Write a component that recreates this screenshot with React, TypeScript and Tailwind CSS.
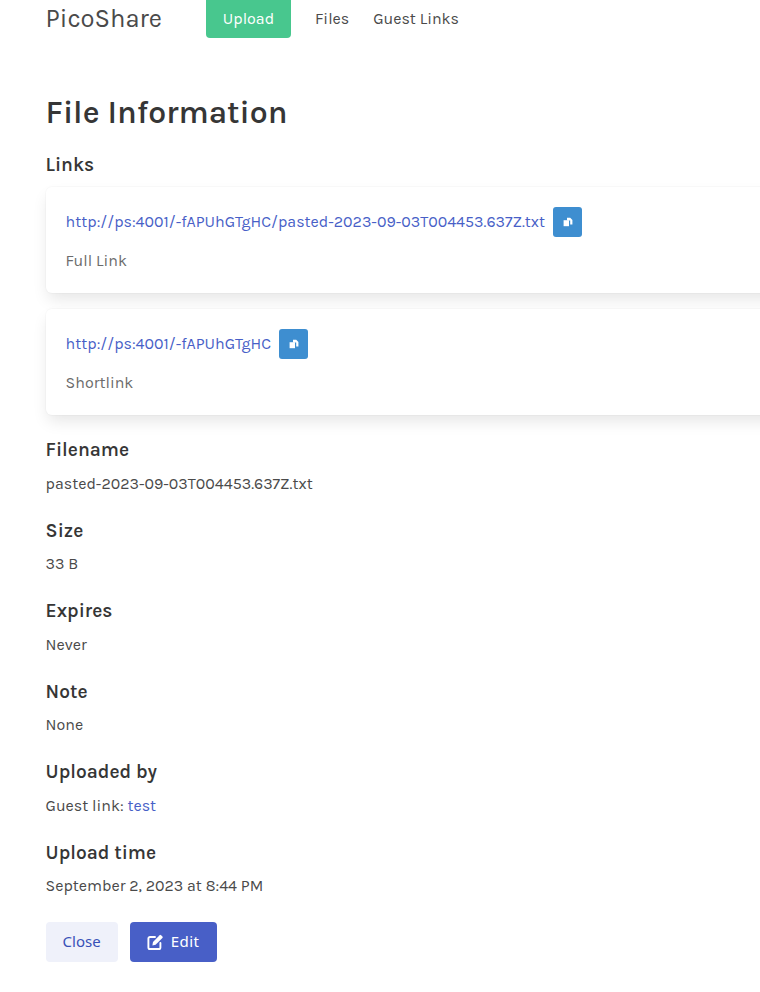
import React from 'react';

const details = [
  { label: 'Filename', value: 'pasted-2023-09-03T004453.637Z.txt' },
  { label: 'Size', value: '33 B' },
  { label: 'Expires', value: 'Never' },
  { label: 'Note', value: 'None' },
];

const CopyIcon = () => (
  <svg viewBox="0 0 10 10" className="w-[10px] h-[10px]" fill="currentColor">
    <path d="M4 .8h3.2L9.4 3v4.4H7.2V3.6H4z" />
    <path d="M.6 3.2h5.4v6H.6z" />
  </svg>
);

const EditIcon = () => (
  <svg viewBox="0 0 16 16" className="w-[16px] h-[16px]" fill="none">
    <path d="M8 3H3a1.6 1.6 0 0 0-1.6 1.6v8.8A1.6 1.6 0 0 0 3 15h8.8a1.6 1.6 0 0 0 1.6-1.6V9" stroke="currentColor" strokeWidth="1.9" strokeLinecap="round" />
    <path d="M12.6 1.2a1 1 0 0 1 1.4 0l1.4 1.4a1 1 0 0 1 0 1.4L8.6 10.8 5.4 11.4 6 8z" fill="currentColor" />
  </svg>
);

const LinkCard = ({ href, label }: { href: string; label: string }) => (
  <div className="w-[760px] h-[106px] rounded-md bg-white px-5 pt-5 shadow-[0_8px_16px_-2px_rgba(10,10,10,0.1),0_0_0_1px_rgba(10,10,10,0.02)]">
    <div className="flex items-center h-[30px]">
      <a href="#" className="text-[#485fc7] text-[16px]">
        {href}
      </a>
      <button className="ml-2 flex items-center justify-center w-[29px] h-[30px] rounded-[3px] bg-[#3e8ed0] text-white">
        <CopyIcon />
      </button>
    </div>
    <p className="mt-[13px] text-[#6b6b6b] text-[16px] leading-[22px]">{label}</p>
  </div>
);

const Detail = ({ label, children }: { label: string; children: React.ReactNode }) => (
  <div className="h-[80.5px]">
    <h3 className="text-[19.2px] leading-[26px] font-semibold text-[#363636]">{label}</h3>
    <p className="mt-[9.6px] text-[16px] leading-[22px] text-[#4a4a4a]">{children}</p>
  </div>
);

export default function App() {
  return (
    <div className="h-[992px] w-[760px] overflow-hidden bg-white font-['Karla','Noto_Sans','Open_Sans',sans-serif]">
      {/* Navbar, scrolled slightly off the top */}
      <nav className="flex items-end h-[38px] pl-[45.6px] overflow-hidden text-[#4a4a4a]">
        <span className="w-[160.4px] h-[38px] flex items-center text-[25.6px]">PicoShare</span>
        <a href="#" className="flex items-center justify-center w-[85px] h-[44px] pt-[6px] rounded-[4px] bg-[#48c78e] text-white text-[16px]">
          Upload
        </a>
        <a href="#" className="ml-[24px] h-[38px] flex items-center text-[16px]">Files</a>
        <a href="#" className="ml-[24px] h-[38px] flex items-center text-[16px]">Guest Links</a>
      </nav>

      <main className="px-[45.6px]">
        <h1 className="mt-[56px] text-[32px] leading-[38px] font-semibold text-[#363636]">File Information</h1>

        <h3 className="mt-[20px] text-[19.2px] leading-[26px] font-semibold text-[#363636]">Links</h3>
        <div className="mt-[9px] flex flex-col gap-4">
          <LinkCard href="http://ps:4001/-fAPUhGTgHC/pasted-2023-09-03T004453.637Z.txt" label="Full Link" />
          <LinkCard href="http://ps:4001/-fAPUhGTgHC" label="Shortlink" />
        </div>

        <div className="mt-[22.4px]">
          {details.map((d) => (
            <Detail key={d.label} label={d.label}>{d.value}</Detail>
          ))}
          <Detail label="Uploaded by">
            Guest link: <a href="#" className="text-[#485fc7]">test</a>
          </Detail>
          <Detail label="Upload time">September 2, 2023 at 8:44 PM</Detail>
        </div>

        <div className="mt-[1.2px] flex gap-3 font-['Noto_Sans',sans-serif]">
          <button className="w-[72px] h-[40px] rounded-[4px] bg-[#eff1fa] text-[#3850b7] text-[15px]">Close</button>
          <button className="w-[87px] h-[40px] rounded-[4px] bg-[#485fc7] text-white text-[15px] tracking-[0.5px] flex items-center justify-center gap-2">
            <EditIcon />
            Edit
          </button>
        </div>
      </main>
    </div>
  );
}
